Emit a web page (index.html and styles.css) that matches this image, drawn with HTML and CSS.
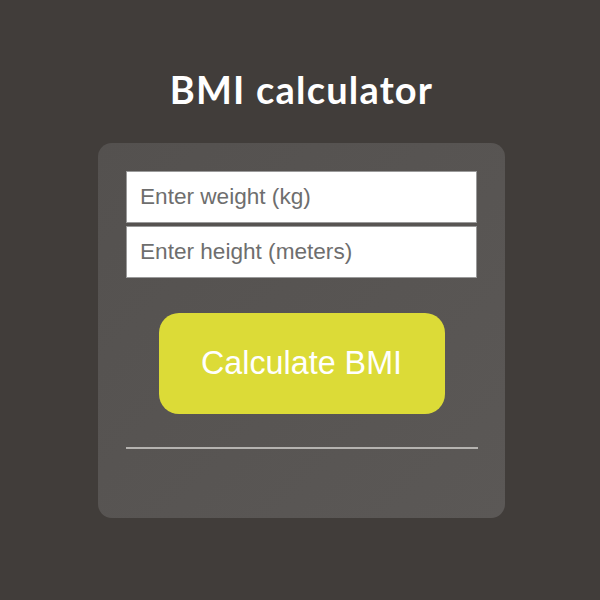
FILE: index.html
```html
<!DOCTYPE html>
<html>
<head>
<meta charset="utf-8">
<link rel="stylesheet" href="styles.css">
</head>
<body>
<main class="page">
  <h1 class="title">BMI calculator</h1>
  <section class="card">
    <input class="field" type="text" placeholder="Enter weight (kg)">
    <input class="field" type="text" placeholder="Enter height (meters)">
    <button class="calc">Calculate BMI</button>
    <hr class="rule">
  </section>
</main>
</body>
</html>
```
FILE: styles.css
```css
html, body {
  margin: 0;
  padding: 0;
  width: 600px;
  height: 600px;
  background: #413d3a;
}
.page {
  display: flex;
  flex-direction: column;
  align-items: center;
  padding-top: 65px;
  padding-left: 3px;
}
.title {
  margin: 0;
  font-family: "Lato", "DejaVu Sans", sans-serif;
  font-weight: 700;
  font-size: 38px;
  line-height: 48px;
  color: #ffffff;
  letter-spacing: 1.2px;
}
.card {
  margin-top: 30px;
  width: 407px;
  height: 375px;
  box-sizing: border-box;
  padding: 28px 28px 0 28px;
  border-radius: 14px;
  background: linear-gradient(135deg, #54514f 0%, #5b5856 100%);
  display: flex;
  flex-direction: column;
  align-items: center;
}
.field {
  box-sizing: border-box;
  width: 351px;
  height: 52px;
  margin: 0 0 3px 0;
  padding: 0 13px;
  border: 1px solid #9a9a9a;
  background: #ffffff;
  font-family: "Liberation Sans", Arial, sans-serif;
  font-size: 22.6px;
  color: #333;
  outline: none;
}
.field::placeholder {
  color: #6e6e6e;
}
.calc {
  margin-top: 32px;
  width: 286px;
  height: 101px;
  border: none;
  border-radius: 20px;
  background: #dcdb37;
  color: #ffffff;
  font-family: "Liberation Sans", Arial, sans-serif;
  font-size: 32.3px;
  cursor: pointer;
}
.rule {
  margin: 33px 0 0 0;
  width: 352px;
  height: 2px;
  border: none;
  background: #b5b3b0;
}
```
